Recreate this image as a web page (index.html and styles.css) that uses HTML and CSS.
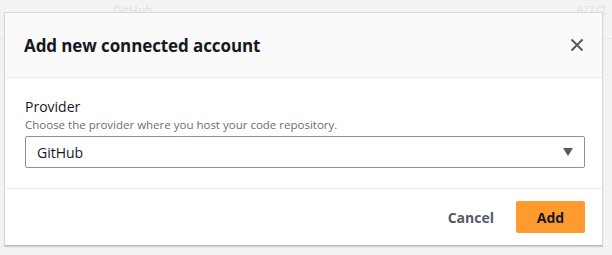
FILE: index.html
```html
<!DOCTYPE html>
<html>
<head>
<meta charset="utf-8">
<link rel="stylesheet" href="styles.css">
</head>
<body>
<div class="page">
  <div class="bg-row">
    <span class="bg-name">GitHub</span>
    <span class="bg-date">6/7/2</span>
  </div>
  <div class="modal">
    <div class="modal-header">
      <h2 class="title">Add new connected account</h2>
      <button class="close" aria-label="Close">
        <svg width="14" height="14" viewBox="0 0 14 14"><path d="M1.5 1.5 L12.5 12.5 M12.5 1.5 L1.5 12.5" stroke="#545b64" stroke-width="2" fill="none"/></svg>
      </button>
    </div>
    <div class="modal-body">
      <div class="label">Provider</div>
      <div class="desc">Choose the provider where you host your code repository.</div>
      <div class="select">
        <span class="select-value">GitHub</span>
        <svg class="caret" width="10" height="8" viewBox="0 0 10 8"><path d="M0 0 H10 L5 8 Z" fill="#545b64"/></svg>
      </div>
    </div>
    <div class="modal-footer">
      <button class="btn-link">Cancel</button>
      <button class="btn-primary">Add</button>
    </div>
  </div>
</div>
</body>
</html>
```
FILE: styles.css
```css
html, body {
  margin: 0;
  padding: 0;
}
body {
  background: #f2f3f3;
  font-family: "Open Sans", "Liberation Sans", sans-serif;
  color: #16191f;
}
.page {
  position: relative;
  width: 612px;
  height: 255px;
  overflow: hidden;
}
.bg-row {
  display: flex;
  justify-content: space-between;
  height: 39px;
  border-bottom: 1px solid #e6e8e8;
  padding: 2px 6px 0 113px;
  box-sizing: border-box;
  font-size: 12px;
  color: #dfe2e2;
}
.modal {
  position: absolute;
  left: 4px;
  top: 12px;
  width: 599px;
  background: #ffffff;
  border: 1px solid #d5dbdb;
  border-bottom-color: #b8bfc0;
  box-shadow: 0 1px 1px rgba(0, 0, 0, 0.15);
  box-sizing: border-box;
}
.modal-header {
  display: flex;
  align-items: center;
  justify-content: space-between;
  height: 64px;
  padding: 0 18px 0 19px;
  background: #fafafa;
  border-bottom: 1px solid #eaeded;
}
.title {
  margin: 0;
  font-size: 17px;
  font-weight: 700;
  color: #16191f;
  letter-spacing: -0.1px;
}
.close {
  display: flex;
  padding: 0;
  border: 0;
  background: none;
}
.modal-body {
  padding: 19px 17px 20px 20px;
  border-bottom: 1px solid #eaeded;
}
.label {
  font-size: 14px;
  line-height: 20px;
  color: #16191f;
}
.desc {
  font-size: 11.5px;
  line-height: 16px;
  color: #687078;
  margin-bottom: 3px;
}
.select {
  display: flex;
  align-items: center;
  justify-content: space-between;
  height: 32px;
  padding: 0 11px 0 11px;
  border: 1px solid #879596;
  border-radius: 2px;
  box-sizing: border-box;
}
.select-value {
  font-size: 14px;
  color: #16191f;
}
.modal-footer {
  display: flex;
  justify-content: flex-end;
  align-items: center;
  gap: 2px;
  padding: 12px 17px 12px 20px;
}
.btn-link {
  font-family: inherit;
  font-size: 14px;
  font-weight: 700;
  color: #545b64;
  background: none;
  border: 0;
  padding: 0 20px;
  height: 32px;
}
.btn-primary {
  font-family: inherit;
  font-size: 14px;
  font-weight: 700;
  color: #16191f;
  background: #ff9a2e;
  border: 0;
  border-radius: 2px;
  width: 69px;
  height: 32px;
  padding: 0;
}
```
